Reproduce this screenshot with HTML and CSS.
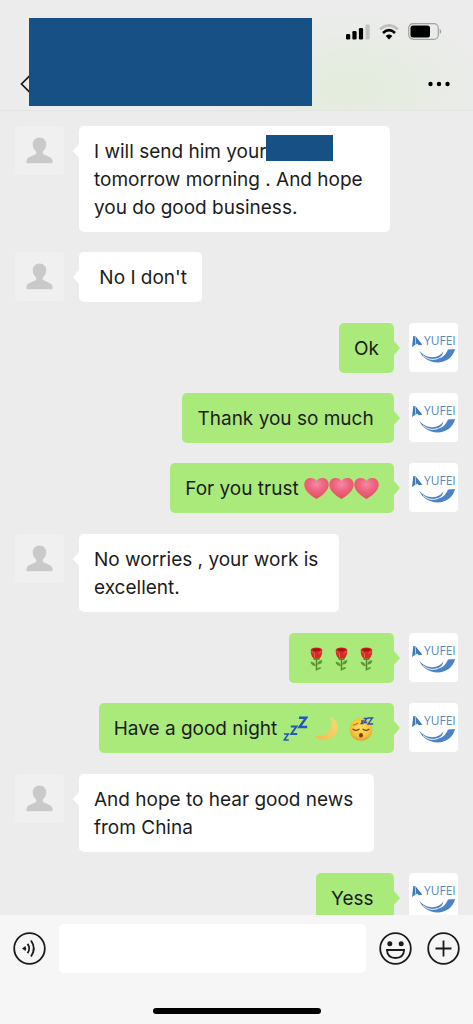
FILE: index.html
```html
<!DOCTYPE html>
<html lang="en">
<head>
<meta charset="utf-8">
<meta name="viewport" content="width=device-width, initial-scale=1">
<title>Chat</title>
<link rel="stylesheet" href="styles.css">
</head>
<body>
<svg class="defs" aria-hidden="true">
  <defs>
    <radialGradient id="heartFill" cx="50%" cy="30%" r="65%">
      <stop offset="0" stop-color="#f58aa6"/><stop offset=".5" stop-color="#ee6480"/><stop offset="1" stop-color="#e3505f"/>
    </radialGradient>
    <radialGradient id="faceFill" cx="50%" cy="40%" r="60%">
      <stop offset="0" stop-color="#fde05c"/><stop offset=".7" stop-color="#f9c23c"/><stop offset="1" stop-color="#e79a2b"/>
    </radialGradient>
    <linearGradient id="moonFill" x1="0" y1="1" x2="1" y2="0">
      <stop offset="0" stop-color="#eebc4e"/><stop offset="1" stop-color="#f8dc72"/>
    </linearGradient>
  </defs>
  <symbol id="person" viewBox="0 0 49 49">
    <path fill="#c9c9c9" d="M24.500 11.500c4 0 6.700 2.800 6.700 6.800 0 3-1.300 5.400-3 6.900-.8.800-.7 2.500.4 3.100l6.300 2.900c1.900.9 2.600 2.200 2.600 3.800v1.500q0 .8-.8.800H12.300q-.8 0-.8-.8V35c0-1.600.7-2.900 2.600-3.800l6.300-2.900c1.100-.6 1.200-2.300.4-3.100-1.700-1.500-3-3.900-3-6.900 0-4 2.700-6.800 6.700-6.800z"/>
  </symbol>
  <symbol id="yufei" viewBox="0 0 49 49">
    <path fill="#3f79b8" d="M4.300 13 3 24l3.600-2.600-.9-8.400z M6.200 12.800l7.200 9-3.700.4-1.500-1.600-.9 1.200z"/>
    <path fill="#4a84c6" d="M10 27.500c4.500 5.300 11 7.800 17 6.200 3.600-1 6-2.900 7.300-5.500-.4 4-3.300 6.700-7.300 7.500 5.400.2 9.600-3.400 12-9.200l7-.4c-1.500 7.300-7.500 12.800-16.300 13.300C20.500 39.800 13.500 35 10 27.500z"/>
    <path fill="none" stroke="#fff" stroke-width=".9" d="M14 32.500c4.500 3.800 9.500 4.800 15 3"/>
  </symbol>
  <symbol id="heart" viewBox="0 0 25 25">
    <path fill="url(#heartFill)" d="M12.500 23C6 19.200.3 14.400.3 8.700.3 4.700 3 2 6.700 2c2.500 0 4.700 1.100 5.800 2.900C13.600 3.100 15.800 2 18.300 2c3.700 0 6.400 2.700 6.400 6.700 0 5.700-5.700 10.500-12.200 14.300z"/>
  </symbol>
  <symbol id="rose" viewBox="0 0 25 25">
    <path fill="none" stroke="#55892b" stroke-width="1.500" d="M12.500 12v12.500"/>
    <path fill="#5d9632" d="M12 20c-1-3-3-4.300-5.500-4.200.4 2.800 2.400 4.400 5.500 4.200zM13 18.500c.8-3 2.800-4.500 5.400-4.300-.2 3-2.200 4.700-5.400 4.300zM12.500 23.500c1.300-2 3-2.700 4.700-2-.9 1.800-2.700 2.600-4.700 2z"/>
    <path fill="#568a2d" d="m8.500 10 4 3.800 4.200-3.800-1.500 4h-5.400z"/>
    <path fill="#d62b25" d="M6.800 3.500Q8 1.500 12.500 1.500t5.700 2c.3 3.500-.5 6.500-2.200 8.300q-3.500 1.700-7 0C7.300 10 6.500 7 6.800 3.500z"/>
    <path fill="#a31419" d="M8.500 3.200q4-1.800 8 0-.5 2.200-4 2.200t-4-2.200z"/>
    <path fill="none" stroke="#ef6458" stroke-width=".9" d="M7.500 5q1.200 2.300 3 2.500v4M17.500 5q-.5 1.800-3 2.500"/>
  </symbol>
  <symbol id="zzz" viewBox="0 0 25 25">
    <path fill="none" stroke="#2456bd" stroke-width="2.400" d="M16 1.700h7.200L16.500 11h7.700"/>
    <path fill="none" stroke="#2456bd" stroke-width="1.900" d="M7.800 10.500h5.700L8.200 18h6"/>
    <path fill="none" stroke="#2456bd" stroke-width="1.500" d="M1 18h4.300L1.300 24h4.500"/>
  </symbol>
  <symbol id="moon" viewBox="0 0 25 25">
    <path fill="url(#moonFill)" d="M17.500.8c4.800 2.300 7.200 6.300 7 11.200C24.200 19.300 19 24 12 24.200 7 24.300 3 22.500.7 19c3 1.300 7.200 1.500 10.800-.3C18 15.500 20.500 7.800 17.500.8z"/>
  </symbol>
  <symbol id="sleepy" viewBox="0 0 25 25">
    <circle cx="12" cy="13.500" r="11.300" fill="url(#faceFill)"/>
    <g fill="none" stroke="#73421a" stroke-width="1.200" stroke-linecap="round">
      <path d="M4 13.200q3 2.500 6 0M14 13.200q3 2.500 6 0"/>
      <path stroke="#b8792a" d="M4.500 9.200q2.500-.2 4.300-2"/>
    </g>
    <ellipse cx="12" cy="19.200" rx="2" ry="2.300" fill="#70401c"/>
    <path fill="none" stroke="#2b4fae" stroke-width="1.300" d="M18.500 2h5l-4.500 6h5.200M14.700 2.500h3.300L15 6.500h3.200M12.200 5h2l-2 2.700h2.300"/>
  </symbol>
</svg>

<div class="app">
  <header class="header">
    <button class="back" type="button" aria-label="Back">
      <svg width="9" height="20" viewBox="0 0 9 20"><path d="M10 1.500 1.500 10 10 18.500" fill="none" stroke="#1c1c1c" stroke-width="1.700"/></svg>
    </button>
    <div class="title-cover"></div>
    <div class="header-side">
      <div class="status">
        <svg width="24" height="16" viewBox="0 0 24 16" role="img" aria-label="Signal">
          <rect x="0" y="10" width="4.200" height="5.500" rx="1.200"/><rect x="6.400" y="7" width="4.200" height="8.500" rx="1.200"/><rect x="12.900" y="4" width="4.200" height="11.500" rx="1.200"/><rect x="19.500" y=".5" width="4.200" height="15" rx="1.200" fill="#c3c3c3"/>
        </svg>
        <svg width="20" height="16" viewBox="0 0 20 16" role="img" aria-label="Wi-Fi">
          <path d="M1 5.300q9-8 18 0" fill="none" stroke="#c1c1c1" stroke-width="2.600"/>
          <path d="M4 8.900q6-5.400 12 0" fill="none" stroke="#000" stroke-width="2.700"/>
          <path d="M10 15.400 6.700 12q3.300-2.900 6.600 0z"/>
        </svg>
        <svg width="34" height="17" viewBox="0 0 34 17" role="img" aria-label="Battery">
          <rect x=".7" y=".7" width="29.600" height="15.600" rx="4.500" fill="none" stroke="#a2a2a2" stroke-width="1.200"/>
          <rect x="2.500" y="2.500" width="19.500" height="12" rx="2.500"/>
          <path d="M31.700 6v5q1.600-.7 1.600-2.500T31.700 6z" fill="#a2a2a2"/>
        </svg>
      </div>
      <button class="more" type="button" aria-label="More">
        <svg width="22" height="6" viewBox="0 0 22 6"><circle cx="2.500" cy="3" r="2.200"/><circle cx="11" cy="3" r="2.200"/><circle cx="19.500" cy="3" r="2.200"/></svg>
      </button>
    </div>
  </header>

  <main class="chat">
    <section class="turn">
      <div class="message"><svg class="avatar person"><use href="#person"/></svg><p class="bubble">I will send him your<span class="cover"></span> tomorrow morning . And hope you do good business.</p></div>
      <div class="message"><svg class="avatar person"><use href="#person"/></svg><p class="bubble">&nbsp;No I don't</p></div>
    </section>
    <section class="turn">
      <div class="message mine"><svg class="avatar"><use href="#yufei"/><text class="logo-text" x="15" y="22">YUFEI</text></svg><p class="bubble">Ok</p></div>
      <div class="message mine"><svg class="avatar"><use href="#yufei"/><text class="logo-text" x="15" y="22">YUFEI</text></svg><p class="bubble">Thank you so much&nbsp;</p></div>
      <div class="message mine"><svg class="avatar"><use href="#yufei"/><text class="logo-text" x="15" y="22">YUFEI</text></svg><p class="bubble">For you trust <svg class="emoji" role="img" aria-label="heart"><use href="#heart"/></svg><svg class="emoji" role="img" aria-label="heart"><use href="#heart"/></svg><svg class="emoji" role="img" aria-label="heart"><use href="#heart"/></svg></p></div>
    </section>
    <section class="turn">
      <div class="message"><svg class="avatar person"><use href="#person"/></svg><p class="bubble">No worries , your work is&nbsp;<br>excellent.</p></div>
    </section>
    <section class="turn">
      <div class="message mine"><svg class="avatar"><use href="#yufei"/><text class="logo-text" x="15" y="22">YUFEI</text></svg><p class="bubble"><svg class="emoji" role="img" aria-label="rose"><use href="#rose"/></svg><svg class="emoji" role="img" aria-label="rose"><use href="#rose"/></svg><svg class="emoji" role="img" aria-label="rose"><use href="#rose"/></svg></p></div>
      <div class="message mine"><svg class="avatar"><use href="#yufei"/><text class="logo-text" x="15" y="22">YUFEI</text></svg><p class="bubble">Have a good night <svg class="emoji" role="img" aria-label="zzz"><use href="#zzz"/></svg> <svg class="emoji" role="img" aria-label="moon"><use href="#moon"/></svg>&nbsp; <svg class="emoji" role="img" aria-label="sleeping face"><use href="#sleepy"/></svg>&nbsp;</p></div>
    </section>
    <section class="turn">
      <div class="message"><svg class="avatar person"><use href="#person"/></svg><p class="bubble">And hope to hear good news&nbsp;<br>from China</p></div>
    </section>
    <section class="turn">
      <div class="message mine"><svg class="avatar"><use href="#yufei"/><text class="logo-text" x="15" y="22">YUFEI</text></svg><p class="bubble">Yess&nbsp;</p></div>
    </section>
  </main>

  <footer class="footer">
    <form class="composer">
      <button type="button" aria-label="Voice message">
        <svg width="33" height="33" viewBox="0 0 33 33" fill="none" stroke="#1c1c1c" stroke-width="1.800"><circle cx="16.500" cy="16.500" r="15.300"/><path d="m9 16.500 3.400-2.600q1.500 2.600 0 5.200z" fill="#1c1c1c" stroke="none"/><path d="M14.500 11.900q3.400 4.600 0 9.200M18 8.500q5.600 8 0 16"/></svg>
      </button>
      <input class="field" type="text" aria-label="Message">
      <button type="button" aria-label="Emoji">
        <svg width="33" height="33" viewBox="0 0 33 33" fill="none" stroke="#1c1c1c" stroke-width="1.800"><circle cx="16.500" cy="16.500" r="15.300"/><circle cx="10.800" cy="11.700" r="2.500" fill="#1c1c1c" stroke="none"/><circle cx="22.200" cy="11.700" r="2.500" fill="#1c1c1c" stroke="none"/><path d="M7.900 18h17.200c-.3 5-3.500 8-8.600 8s-8.300-3-8.600-8z"/></svg>
      </button>
      <button type="button" aria-label="Add">
        <svg width="33" height="33" viewBox="0 0 33 33" fill="none" stroke="#1c1c1c" stroke-width="1.800"><circle cx="16.500" cy="16.500" r="15.300"/><path d="M16.500 8.500v16M8.500 16.500h16"/></svg>
      </button>
    </form>
    <div class="home-bar"></div>
  </footer>
</div>
</body>
</html>
```

FILE: styles.css
```css
* {
  box-sizing: border-box;
}

body {
  margin: 0;
  font-family: Inter, "Liberation Sans", sans-serif;
  font-size: 19px;
  line-height: 28px;
  color: #1c1c1c;
  background: #ececec;
}

svg {
  display: block;
}

button {
  padding: 0;
  border: 0;
  background: none;
  color: inherit;
}

.defs {
  position: absolute;
  width: 0;
  height: 0;
}

.app {
  display: flex;
  flex-direction: column;
  height: 100vh;
}

.header {
  display: flex;
  padding: 18px 0 4px 20px;
  border-bottom: 1px solid #e4e5e3;
  background: radial-gradient(ellipse 150px 80px at 74% 80%, #e3ecdc, #ececec);
}

.back {
  align-self: flex-end;
  padding-bottom: 12px;
}

.title-cover {
  flex: 1;
  height: 88px;
  background: #175084;
}

.header-side {
  display: flex;
  flex-direction: column;
  justify-content: space-between;
  align-items: flex-end;
  width: 161px;
  padding: 5px 23px 19px 0;
}

.status {
  display: flex;
  align-items: center;
  gap: 9px;
  margin-right: 8px;
}

.chat {
  display: flex;
  flex: 1;
  flex-direction: column;
  gap: 21px;
  min-height: 0;
  overflow: hidden;
  padding: 15px 15px 0;
}

.turn {
  display: flex;
  flex-direction: column;
  gap: 20px;
}

.message {
  display: flex;
  align-items: flex-start;
  gap: 15px;
}

.mine {
  flex-direction: row-reverse;
}

.avatar {
  flex: none;
  width: 49px;
  height: 49px;
  border-radius: 4px;
  background: #fff;
}

.person {
  background: #f0f0f0;
}

.logo-text {
  font-family: "Open Sans", sans-serif;
  font-size: 12px;
  fill: #5b88ba;
}

.bubble {
  position: relative;
  max-width: 311px;
  margin: 0;
  padding: 12px 15px 10px;
  border-radius: 5px;
  background: #fff;
}

.bubble::before {
  content: "";
  position: absolute;
  top: 18px;
  right: 100%;
  width: 6px;
  height: 14px;
  background: inherit;
  clip-path: polygon(100% 0, 0 50%, 100% 100%);
}

.mine .bubble {
  background: #a9ea7b;
}

.mine .bubble::before {
  right: auto;
  left: 100%;
  clip-path: polygon(0 0, 100% 50%, 0 100%);
}

.cover {
  display: inline-block;
  width: 67px;
  height: 26px;
  margin-top: -3px;
  vertical-align: top;
  background: #175084;
}

.emoji {
  display: inline-block;
  width: 25px;
  height: 25px;
  margin-top: 1px;
  vertical-align: top;
}

.footer {
  padding: 9px 13px 10px;
  background: #f6f6f6;
}

.composer {
  display: flex;
  align-items: center;
  gap: 15px;
}

.composer .field {
  flex: 1;
  min-width: 0;
  height: 49px;
  margin: 0 -2px;
  padding: 0 12px;
  border: 0;
  border-radius: 5px;
  background: #fff;
  font: inherit;
}

.home-bar {
  width: 168px;
  height: 6px;
  margin: 35px auto 0;
  border-radius: 3px;
  background: #000;
}
```
